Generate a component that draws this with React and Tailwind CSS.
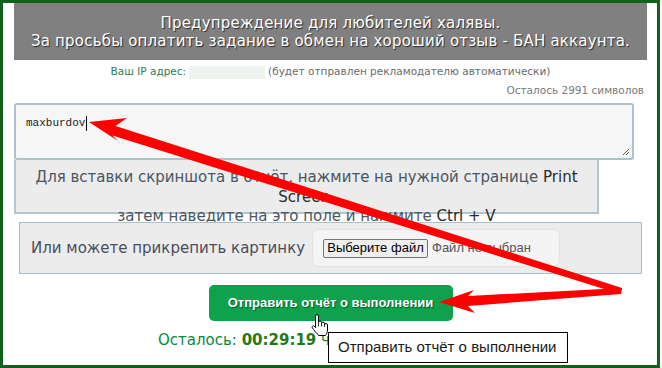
import React from 'react';

function HandCursor() {
  return (
    <svg width="18" height="23" viewBox="-0.5 -0.5 18 23" className="absolute left-[311px] top-[314px]">
      <path
        d="M4 13 V1.6 a1.5 1.5 0 0 1 3 0 V8 a1.5 1.5 0 0 1 3 0 V9 a1.5 1.5 0 0 1 3 0 V10.5 a1.5 1.5 0 0 1 3 0 V15.5 c0 2.5 -1 4 -2 5.5 H7 c-1 -1.5 -3 -3.5 -5 -6 l-1.2 -1.8 a1.3 1.3 0 0 1 2 -1.6 z"
        fill="white"
        stroke="black"
        strokeWidth="1"
        strokeLinejoin="round"
      />
      <path d="M7 8 V12 M10 9 V12 M13 10.5 V12.5" stroke="black" strokeWidth="0.8" />
    </svg>
  );
}

function Arrows() {
  return (
    <svg width="662" height="368" className="absolute left-0 top-0 pointer-events-none">
      <polygon
        points="89,122 127,118 115.5,126 622,288 620,294 112.5,135.6 118,141"
        fill="#ff0000"
      />
      <polygon
        points="439,302 474,290 468,296 622,288 621,294 468,306 475,313"
        fill="#ff0000"
      />
    </svg>
  );
}

export default function App() {
  return (
    <div className="w-[662px] h-[368px] bg-white relative overflow-hidden font-['DejaVu_Sans',sans-serif]">
      <div className="w-[660px] h-[368px] border-[3px] border-[#145f1c] pl-[11px] pr-[10px] flex flex-col">
        {/* warning banner */}
        <div className="h-[57px] bg-[#808080] flex flex-col items-center justify-center text-white text-[15px] leading-[18px] tracking-[0.2px] [text-shadow:1px_1px_1px_#2a2a2a]">
          <div>Предупреждение для любителей халявы.</div>
          <div>За просьбы оплатить задание в обмен на хороший отзыв - БАН аккаунта.</div>
        </div>

        <div className="mt-[4px] h-[16px] flex justify-center items-center text-[10.5px] whitespace-nowrap">
          <span className="text-[#2f7a5c]">Ваш IP адрес:</span>
          <span className="w-[76px] h-[13px] bg-[#eef3ef] mx-[3px]" />
          <span className="text-[#6b6b6b]">(будет отправлен рекламодателю автоматически)</span>
        </div>

        <div className="mt-[3px] h-[14px] text-right pr-[3px] text-[10.5px] leading-[14px] text-[#7a7a7a]">
          Осталось 2991 символов
        </div>

        {/* report textarea */}
        <div className="mt-[6px] w-[620px] h-[57px] border-2 border-[#adc3cb] rounded-[3px] bg-[#f6f6f6] relative pl-[10px] pt-[11px]">
          <div className="flex items-center h-[14px]">
            <span className="font-['Liberation_Mono',monospace] text-[11px] leading-[14px] text-[#222]">maxburdov</span>
            <span className="w-px h-[15px] bg-black ml-px" />
          </div>
          <svg width="9" height="9" className="absolute right-[2px] bottom-[2px]">
            <path d="M8 2 L2 8 M8 5 L5 8" stroke="#555" strokeWidth="1" />
          </svg>
        </div>

        {/* paste area */}
        <div className="w-[585px] h-[54px] bg-[#ececec] border-2 border-t-0 border-[#b3c6cd] text-center text-[15px] leading-[19.5px] text-[#4b5563] pt-[8px] whitespace-nowrap">
          Для вставки скриншота в отчёт, нажмите на нужной странице <span className="text-[#2b2b2b] font-medium">Print</span>
          <br />
          <span className="text-[#2b2b2b] font-medium">Screen,</span>
          <br />
          затем наведите на это поле и нажмите <span className="text-[#2b2b2b] font-medium">Ctrl + V</span>
        </div>

        {/* file attach */}
        <div className="mt-[8px] ml-[5px] w-[623px] h-[52px] bg-[#ececec] border border-[#a9c0c8] flex items-center pl-[11px]">
          <span className="w-[282px] whitespace-nowrap text-[15px] text-[#4a4d5c]">Или можете прикрепить картинку</span>
          <div className="w-[246px] h-[36px] rounded-[6px] bg-[#f4f4f4] shadow-[0_0_2px_rgba(0,0,0,0.15)] flex items-center pl-[10px] font-['Liberation_Sans',Arial,sans-serif] text-[13px]">
            <div className="w-[105px] h-[19px] border border-[#767676] bg-[#efefef] rounded-[2px] flex items-center justify-center text-black">
              Выберите файл
            </div>
            <span className="ml-[4px] text-[#555]">Файл не выбран</span>
          </div>
        </div>

        <button className="mt-[11px] self-center w-[244px] h-[36px] rounded-[5px] bg-[#0fa14b] text-white font-bold text-[13px] font-['Liberation_Sans',Arial,sans-serif] [text-shadow:1px_1px_1px_rgba(0,0,0,0.45)]">
          Отправить отчёт о выполнении
        </button>

        <div className="mt-[9px] pl-[144px] text-[15px] leading-[20px] whitespace-nowrap">
          <span className="text-[#0b8a3c]">Осталось: </span>
          <span className="text-[#237a14] font-bold">00:29:19</span>
          <span className="text-[#0b8a3c]"> ч</span>
        </div>
      </div>

      <Arrows />

      <div className="absolute left-[328px] top-[332px] w-[240px] h-[31px] border border-black bg-white flex items-center pl-[9px] text-[15px] text-[#1a1a1a] font-['Liberation_Sans',Arial,sans-serif] whitespace-nowrap">
        Отправить отчёт о выполнении
      </div>

      <HandCursor />
    </div>
  );
}
